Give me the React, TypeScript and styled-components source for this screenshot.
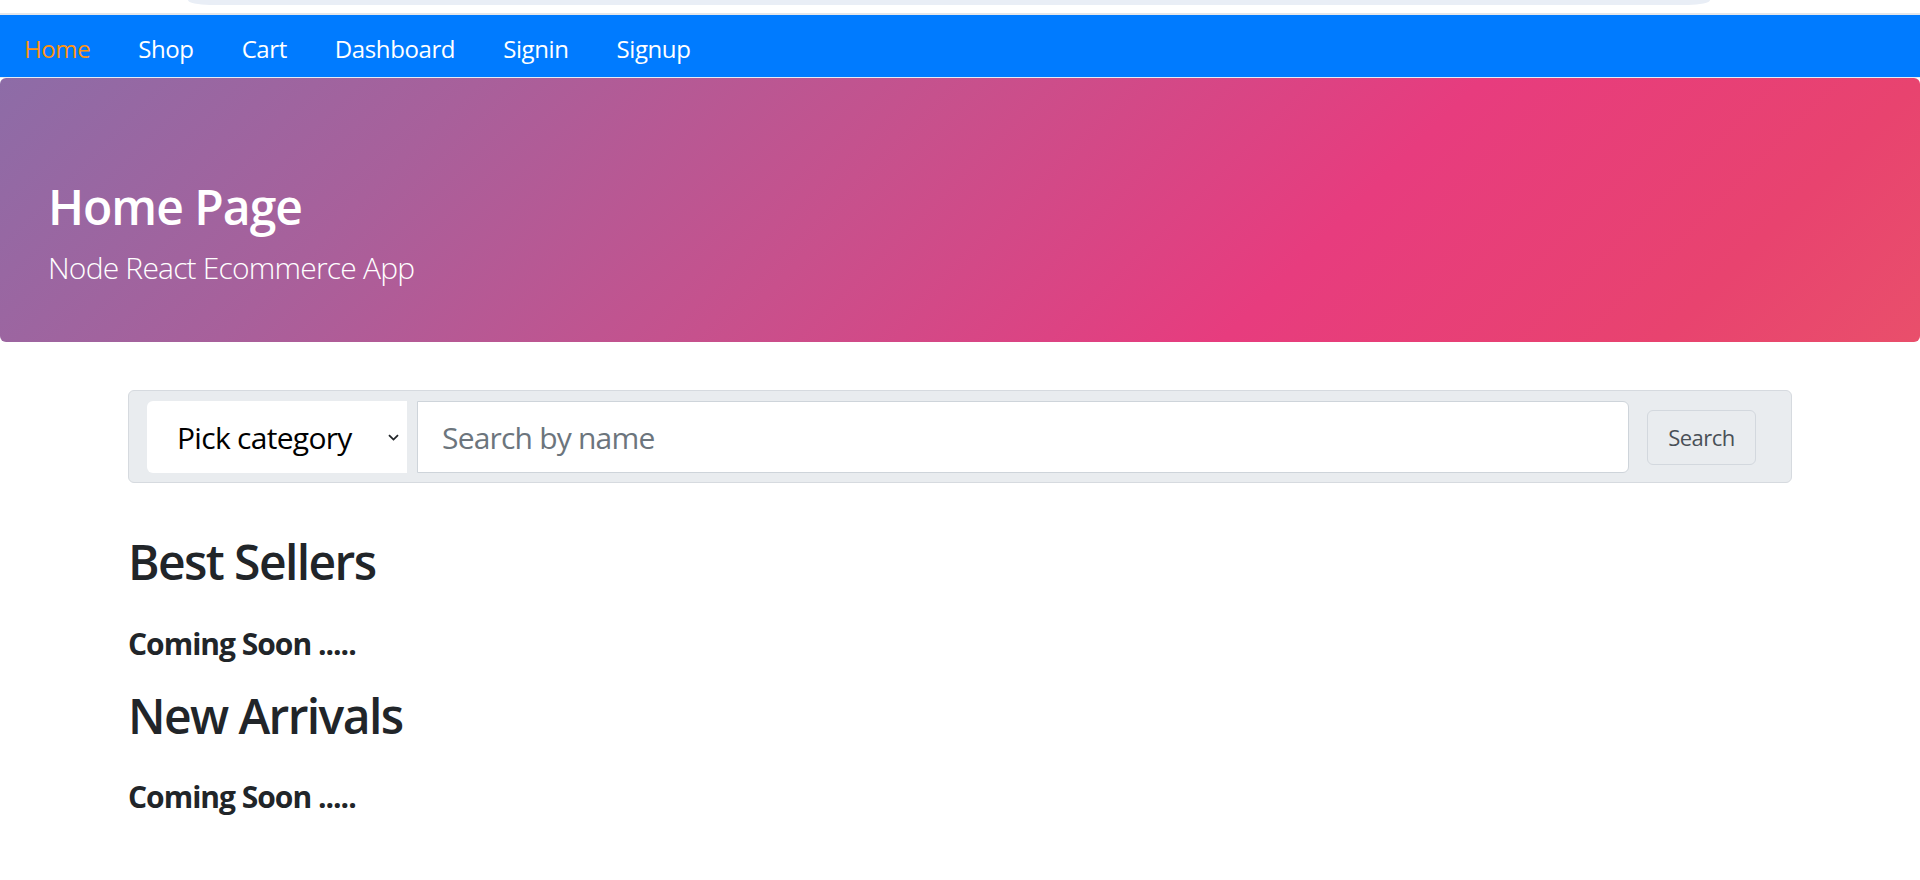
import React from "react";
import styled, { createGlobalStyle } from "styled-components";

const GlobalStyle = createGlobalStyle`
  html, body {
    margin: 0;
    padding: 0;
    background: #ffffff;
  }
  body {
    font-family: "Open Sans", "Noto Sans", "Liberation Sans", sans-serif;
    color: #212529;
  }
  * { box-sizing: border-box; }
`;

const Page = styled.div`
  display: flex;
  flex-direction: column;
  min-height: 880px;
`;

const ChromeStrip = styled.div`
  height: 15px;
  flex-shrink: 0;
  background: #ffffff;
  border-bottom: 2px solid #e4e6ea;
  display: flex;
  align-items: flex-start;
  padding-left: 188px;
`;

const ChromePill = styled.div`
  width: 1522px;
  height: 5px;
  background: #e9eef6;
  border-radius: 0 0 22px 22px / 0 0 5px 5px;
`;

const NavBar = styled.nav`
  height: 63px;
  flex-shrink: 0;
  background: #007bff;
  border-bottom: 1px solid #e3ebf5;
  display: flex;
  align-items: stretch;
`;

const NavLink = styled.a<{ $active?: boolean }>`
  display: flex;
  align-items: center;
  padding: 5px 24px 0;
  font-size: 24px;
  font-weight: 400;
  letter-spacing: -0.4px;
  color: ${(p) => (p.$active ? "#ff9410" : "#ffffff")};
  text-decoration: none;
  cursor: pointer;
`;

const Jumbotron = styled.header`
  height: 264px;
  flex-shrink: 0;
  border-radius: 6px;
  background: linear-gradient(
    -45deg,
    #e94f6b 0%,
    #e8436f 12%,
    #e73c7e 32%,
    #c8508c 55%,
    #a8609b 78%,
    #8d6ca7 100%
  );
  color: #ffffff;
  padding: 100px 48px 0;
  display: flex;
  flex-direction: column;
`;

const HeroTitle = styled.h2`
  margin: 0;
  font-size: 48px;
  line-height: 57.6px;
  font-weight: 600;
  letter-spacing: -1px;
`;

const HeroLead = styled.p`
  margin: 9px 0 0;
  font-size: 30px;
  line-height: 45px;
  font-weight: 300;
  letter-spacing: -0.8px;
`;

const Container = styled.main`
  width: 1664px;
  margin: 48px auto 0;
  display: flex;
  flex-direction: column;
`;

const SearchForm = styled.form`
  display: flex;
  align-items: center;
  background: #e9ecef;
  border: 1px solid #d6dadf;
  border-radius: 6px;
  padding: 10px 35px 9px 18px;
`;

const InputGroup = styled.div`
  flex: 1;
  display: flex;
  height: 72px;
  gap: 10px;
`;

const SelectWrap = styled.div`
  position: relative;
  width: 260px;
  height: 100%;
`;

const CategorySelect = styled.select`
  appearance: none;
  -webkit-appearance: none;
  width: 100%;
  height: 100%;
  border: none;
  border-radius: 6px 0 0 6px;
  background: #ffffff;
  padding: 0 40px 0 30px;
  font-family: inherit;
  font-size: 30px;
  letter-spacing: -0.7px;
  color: #000000;
  outline: none;
`;

const Chevron = styled.svg`
  position: absolute;
  right: 8px;
  top: 50%;
  margin-top: -3px;
  width: 11px;
  height: 7px;
  pointer-events: none;
`;

const SearchInput = styled.input`
  flex: 1;
  height: 100%;
  border: 1px solid #ced4da;
  border-radius: 0 6px 6px 0;
  background: #ffffff;
  padding: 0 24px;
  font-family: inherit;
  font-size: 30px;
  letter-spacing: -0.8px;
  color: #495057;
  outline: none;
  &::placeholder {
    color: #6c757d;
  }
`;

const SearchButton = styled.button`
  margin-left: 18px;
  width: 109px;
  height: 55px;
  background: #e9ecef;
  border: 1px solid #d3d8de;
  border-radius: 6px;
  font-family: inherit;
  font-size: 22px;
  letter-spacing: -0.5px;
  color: #495057;
  padding: 0;
  cursor: pointer;
`;

const Sections = styled.div`
  display: flex;
  flex-direction: column;
  gap: 25px;
  padding-top: 50px;
`;

const Section = styled.section`
  display: flex;
  flex-direction: column;
`;

const SectionTitle = styled.h2`
  margin: 0 0 35px;
  font-size: 48px;
  line-height: 57.6px;
  font-weight: 600;
  letter-spacing: -1.6px;
  color: #212529;
`;

const SectionNote = styled.h5`
  margin: 0;
  font-size: 30px;
  line-height: 36px;
  font-weight: 700;
  letter-spacing: -1px;
  color: #212529;
`;

const navItems = ["Home", "Shop", "Cart", "Dashboard", "Signin", "Signup"];

export default function App() {
  return (
    <Page>
      <GlobalStyle />
      <ChromeStrip>
        <ChromePill />
      </ChromeStrip>
      <NavBar>
        {navItems.map((item, i) => (
          <NavLink key={item} $active={i === 0}>
            {item}
          </NavLink>
        ))}
      </NavBar>
      <Jumbotron>
        <HeroTitle>Home Page</HeroTitle>
        <HeroLead>Node React Ecommerce App</HeroLead>
      </Jumbotron>
      <Container>
        <SearchForm onSubmit={(e) => e.preventDefault()}>
          <InputGroup>
            <SelectWrap>
              <CategorySelect defaultValue="">
                <option value="">Pick category</option>
              </CategorySelect>
              <Chevron viewBox="0 0 11 7">
                <path d="M1 1.2 L5.5 5.6 L10 1.2" fill="none" stroke="#212529" strokeWidth="1.8" />
              </Chevron>
            </SelectWrap>
            <SearchInput type="search" placeholder="Search by name" />
          </InputGroup>
          <SearchButton type="submit">Search</SearchButton>
        </SearchForm>
        <Sections>
          <Section>
            <SectionTitle>Best Sellers</SectionTitle>
            <SectionNote>Coming Soon .....</SectionNote>
          </Section>
          <Section>
            <SectionTitle>New Arrivals</SectionTitle>
            <SectionNote>Coming Soon .....</SectionNote>
          </Section>
        </Sections>
      </Container>
    </Page>
  );
}
